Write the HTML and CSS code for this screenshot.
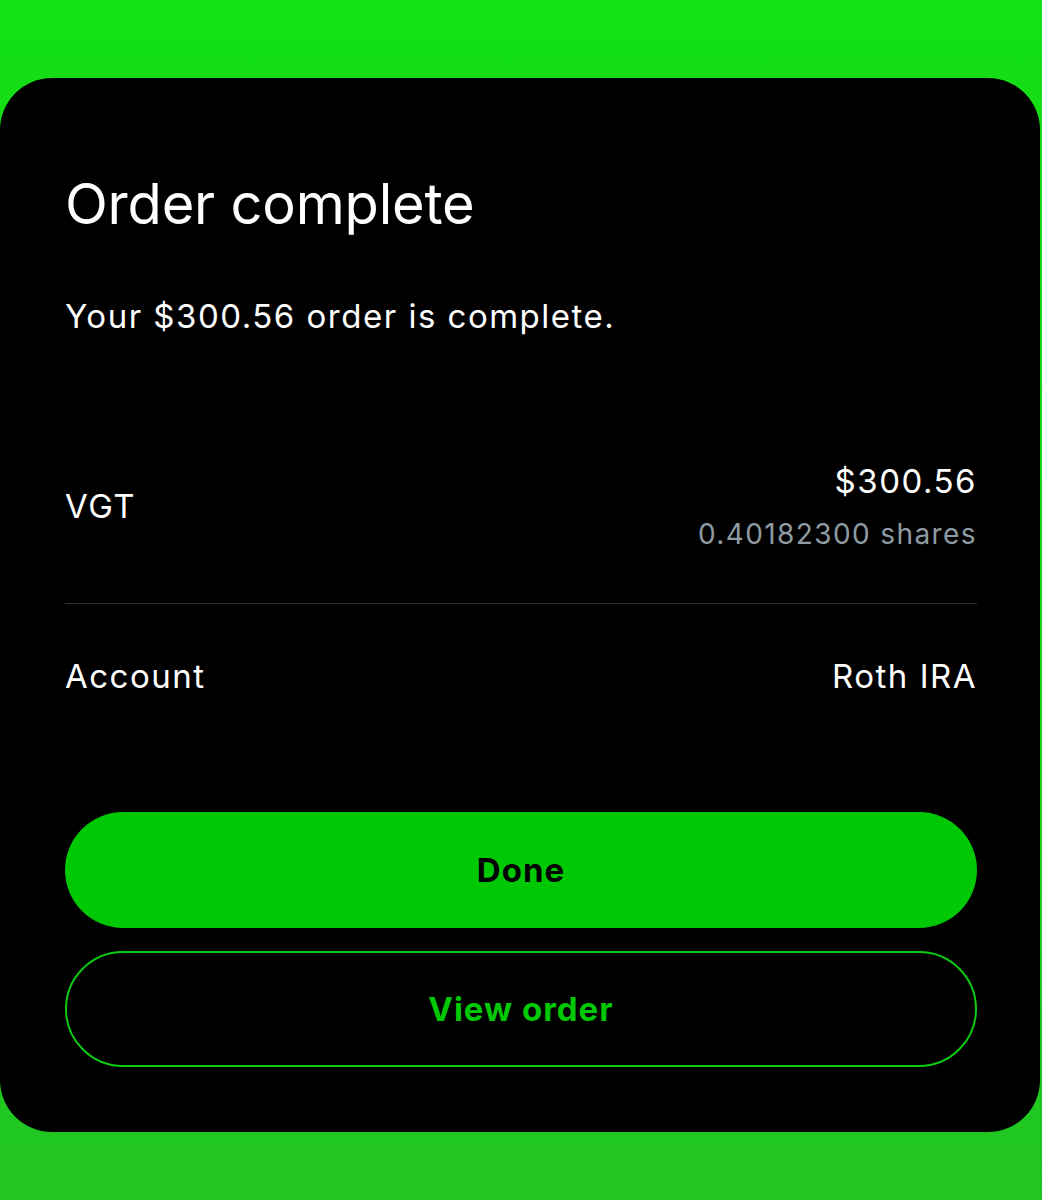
FILE: index.html
```html
<!DOCTYPE html>
<html lang="en">
<head>
<meta charset="utf-8">
<title>Order complete</title>
<link rel="stylesheet" href="styles.css">
</head>
<body>
<main class="sheet">
  <h1 class="title">Order complete</h1>
  <p class="lead">Your $300.56 order is complete.</p>
  <section class="details">
    <div class="row row-asset">
      <span class="label">VGT</span>
      <div class="values">
        <span class="amount">$300.56</span>
        <span class="shares">0.40182300 shares</span>
      </div>
    </div>
    <div class="divider"></div>
    <div class="row row-account">
      <span class="label">Account</span>
      <span class="amount">Roth IRA</span>
    </div>
  </section>
  <div class="actions">
    <button class="btn btn-primary" type="button">Done</button>
    <button class="btn btn-outline" type="button">View order</button>
  </div>
</main>
</body>
</html>
```

FILE: styles.css
```css
html, body {
  margin: 0;
  padding: 0;
}
body {
  width: 1042px;
  height: 1200px;
  background: linear-gradient(180deg, #13e015 0%, #1ad31c 60%, #22c522 100%);
  font-family: Inter, "Noto Sans", "Liberation Sans", sans-serif;
  color: #ffffff;
  padding-top: 78px;
  box-sizing: border-box;
}
.sheet {
  margin: 0 2px 0 0;
  height: 1054px;
  background: #000000;
  border-radius: 52px;
  padding: 0 63px 0 65px;
  box-sizing: border-box;
  display: flex;
  flex-direction: column;
}
.title {
  margin: 98px 0 0 0;
  font-size: 56px;
  font-weight: 400;
  line-height: 56px;
  letter-spacing: -0.2px;
}
.lead {
  margin: 64px 0 0 0;
  font-size: 33px;
  line-height: 40px;
  font-weight: 400;
  letter-spacing: 1.5px;
}
.details {
  margin-top: 125px;
  display: flex;
  flex-direction: column;
}
.row {
  display: flex;
  justify-content: space-between;
  align-items: center;
}
.label {
  font-size: 33px;
  line-height: 40px;
  letter-spacing: 1.5px;
}
.values {
  display: flex;
  flex-direction: column;
  align-items: flex-end;
}
.amount {
  font-size: 33px;
  line-height: 40px;
  letter-spacing: 1.5px;
}
.shares {
  margin-top: 16px;
  font-size: 28px;
  line-height: 34px;
  letter-spacing: 1.4px;
  color: #8f9ba2;
}
.divider {
  height: 1px;
  background: #2e2e30;
  margin-top: 52px;
}
.row-account {
  margin-top: 52px;
}
.actions {
  margin-top: 116px;
  display: flex;
  flex-direction: column;
  gap: 23px;
}
.btn {
  height: 116px;
  border-radius: 58px;
  font-family: Inter, "Noto Sans", "Liberation Sans", sans-serif;
  font-size: 33px;
  font-weight: 700;
  letter-spacing: 1px;
  cursor: pointer;
}
.btn-primary {
  background: #00c805;
  border: none;
  color: #000000;
}
.btn-outline {
  background: #000000;
  border: 2px solid #0ccb12;
  color: #00c805;
}
```
